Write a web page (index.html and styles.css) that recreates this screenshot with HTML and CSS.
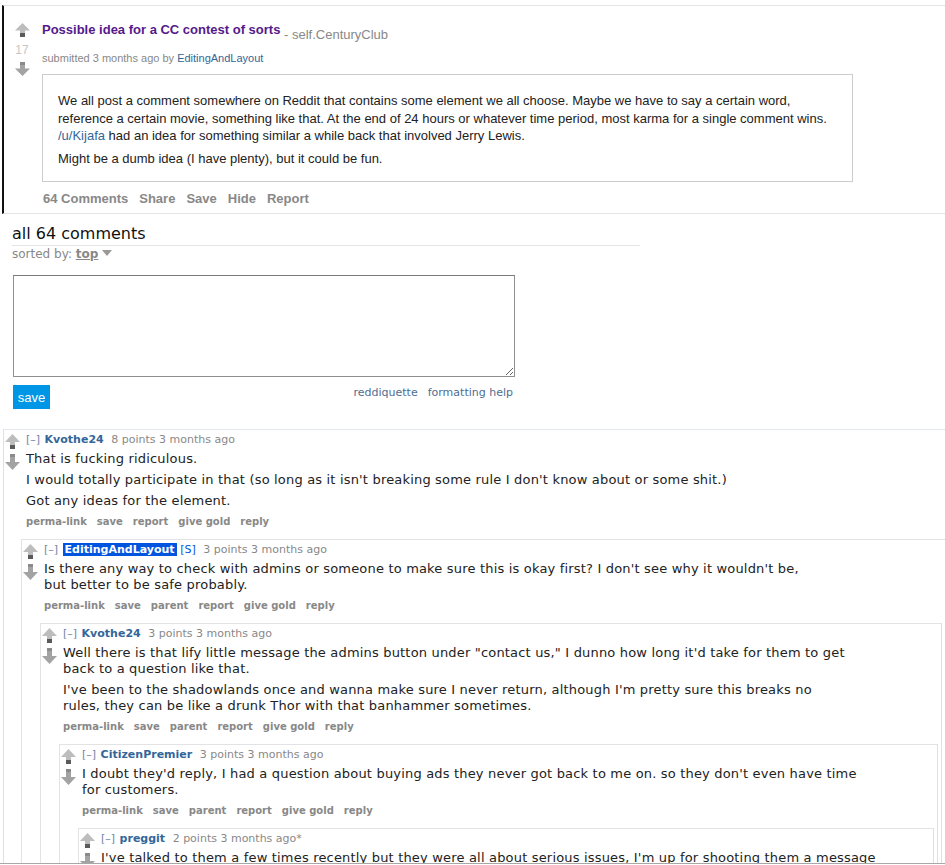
FILE: index.html
```html
<!DOCTYPE html>
<html>

<head>
	<meta charset="utf-8">
	<meta name="viewport" content="width=device-width, initial-scale=1">
	<title>Possible idea for a CC contest of sorts : CenturyClub</title>
	<link rel="stylesheet" href="styles.css">
</head>

<body>
	<div class="page">

		<div class="post">
			<div class="votes">
				<svg class="arrow" width="15" height="14" viewBox="0 0 15 14"><polygon class="up-head" points="7.5,0 15,7.5 10,7.5 10,10 5,10 5,7.5 0,7.5"/><rect class="up-base" x="5" y="10" width="5" height="4"/></svg>
				<div class="score">17</div>
				<svg class="arrow" width="15" height="14" viewBox="0 0 15 14"><rect class="down-base" x="5" y="0" width="5" height="3"/><polygon class="down-head" points="5,3 10,3 10,6.5 15,6.5 7.5,14 0,6.5 5,6.5"/></svg>
			</div>
			<div class="entry">
				<p class="title"><a class="title-link" href="#">Possible idea for a CC contest of sorts</a> <span class="domain">- <span class="domain-name">self.CenturyClub</span></span></p>
				<p class="tagline">submitted 3 months ago by <a href="#">EditingAndLayout</a></p>
				<div class="selftext">
					<p>We all post a comment somewhere on Reddit that contains some element we all choose. Maybe we have to say a certain word,<br>
						reference a certain movie, something like that. At the end of 24 hours or whatever time period, most karma for a single comment wins.<br>
						<a href="#">/u/Kijafa</a> had an idea for something similar a while back that involved Jerry Lewis.</p>
					<p>Might be a dumb idea (I have plenty), but it could be fun.</p>
				</div>
				<ul class="post-buttons">
					<li>64 Comments</li>
					<li>Share</li>
					<li>Save</li>
					<li>Hide</li>
					<li>Report</li>
				</ul>
			</div>
		</div>

		<div class="comment-area">
			<div class="panel-title">all 64 comments</div>
			<div class="sort">sorted by: <b>top</b> <span class="caret"></span></div>

			<textarea class="reply-box"></textarea>
			<div class="reply-bar">
				<button class="save-btn">save</button>
				<div class="help-links">
					<a href="#">reddiquette</a>
					<a href="#">formatting help</a>
				</div>
			</div>
		</div>

		<div class="comments">
			<div class="comment top">
				<div class="row">
					<div class="midcol">
						<svg class="arrow" width="15" height="15" viewBox="0 0 15 15"><polygon class="up-head" points="7.5,0 15,8 10,8 10,11 5,11 5,8 0,8"/><rect class="up-base" x="5" y="11" width="5" height="4"/></svg>
						<svg class="arrow" width="15" height="16" viewBox="0 0 15 16"><rect class="down-base" x="5" y="0" width="5" height="3"/><polygon class="down-head" points="5,3 10,3 10,8 15,8 7.5,16 0,8 5,8"/></svg>
					</div>
					<div class="body">
						<p class="ctag"><span class="expand">[&ndash;]</span> <a class="author" href="#">Kvothe24</a> <span class="when">8 points 3 months ago</span></p>
						<div class="md">
							<p>That is fucking ridiculous.</p>
							<p>I would totally participate in that (so long as it isn't breaking some rule I don't know about or some shit.)</p>
							<p>Got any ideas for the element.</p>
						</div>
						<ul class="flat-list">
							<li>perma-link</li>
							<li>save</li>
							<li>report</li>
							<li>give gold</li>
							<li>reply</li>
						</ul>
					</div>
				</div>

				<div class="comment">
					<div class="row">
						<div class="midcol">
							<svg class="arrow" width="15" height="15" viewBox="0 0 15 15"><polygon class="up-head" points="7.5,0 15,8 10,8 10,11 5,11 5,8 0,8"/><rect class="up-base" x="5" y="11" width="5" height="4"/></svg>
							<svg class="arrow" width="15" height="16" viewBox="0 0 15 16"><rect class="down-base" x="5" y="0" width="5" height="3"/><polygon class="down-head" points="5,3 10,3 10,8 15,8 7.5,16 0,8 5,8"/></svg>
						</div>
						<div class="body">
							<p class="ctag"><span class="expand">[&ndash;]</span> <a class="author submitter" href="#">EditingAndLayout</a> <span class="flag">[S]</span> <span class="when">3 points 3 months ago</span></p>
							<div class="md">
								<p>Is there any way to check with admins or someone to make sure this is okay first? I don't see why it wouldn't be,<br>
									but better to be safe probably.</p>
							</div>
							<ul class="flat-list">
								<li>perma-link</li>
								<li>save</li>
								<li>parent</li>
								<li>report</li>
								<li>give gold</li>
								<li>reply</li>
							</ul>
						</div>
					</div>

					<div class="comment">
						<div class="row">
							<div class="midcol">
								<svg class="arrow" width="15" height="15" viewBox="0 0 15 15"><polygon class="up-head" points="7.5,0 15,8 10,8 10,11 5,11 5,8 0,8"/><rect class="up-base" x="5" y="11" width="5" height="4"/></svg>
								<svg class="arrow" width="15" height="16" viewBox="0 0 15 16"><rect class="down-base" x="5" y="0" width="5" height="3"/><polygon class="down-head" points="5,3 10,3 10,8 15,8 7.5,16 0,8 5,8"/></svg>
							</div>
							<div class="body">
								<p class="ctag"><span class="expand">[&ndash;]</span> <a class="author" href="#">Kvothe24</a> <span class="when">3 points 3 months ago</span></p>
								<div class="md">
									<p>Well there is that lify little message the admins button under "contact us," I dunno how long it'd take for them to get<br>
										back to a question like that.</p>
									<p>I've been to the shadowlands once and wanna make sure I never return, although I'm pretty sure this breaks no<br>
										rules, they can be like a drunk Thor with that banhammer sometimes.</p>
								</div>
								<ul class="flat-list">
									<li>perma-link</li>
									<li>save</li>
									<li>parent</li>
									<li>report</li>
									<li>give gold</li>
									<li>reply</li>
								</ul>
							</div>
						</div>

						<div class="comment">
							<div class="row">
								<div class="midcol">
									<svg class="arrow" width="15" height="15" viewBox="0 0 15 15"><polygon class="up-head" points="7.5,0 15,8 10,8 10,11 5,11 5,8 0,8"/><rect class="up-base" x="5" y="11" width="5" height="4"/></svg>
									<svg class="arrow" width="15" height="16" viewBox="0 0 15 16"><rect class="down-base" x="5" y="0" width="5" height="3"/><polygon class="down-head" points="5,3 10,3 10,8 15,8 7.5,16 0,8 5,8"/></svg>
								</div>
								<div class="body">
									<p class="ctag"><span class="expand">[&ndash;]</span> <a class="author" href="#">CitizenPremier</a> <span class="when">3 points 3 months ago</span></p>
									<div class="md">
										<p>I doubt they'd reply, I had a question about buying ads they never got back to me on. so they don't even have time<br>
											for customers.</p>
									</div>
									<ul class="flat-list">
										<li>perma-link</li>
										<li>save</li>
										<li>parent</li>
										<li>report</li>
										<li>give gold</li>
										<li>reply</li>
									</ul>
								</div>
							</div>

							<div class="comment">
								<div class="row">
									<div class="midcol">
										<svg class="arrow" width="15" height="15" viewBox="0 0 15 15"><polygon class="up-head" points="7.5,0 15,8 10,8 10,11 5,11 5,8 0,8"/><rect class="up-base" x="5" y="11" width="5" height="4"/></svg>
										<svg class="arrow" width="15" height="16" viewBox="0 0 15 16"><rect class="down-base" x="5" y="0" width="5" height="3"/><polygon class="down-head" points="5,3 10,3 10,8 15,8 7.5,16 0,8 5,8"/></svg>
									</div>
									<div class="body">
										<p class="ctag"><span class="expand">[&ndash;]</span> <a class="author" href="#">preggit</a> <span class="when">2 points 3 months ago*</span></p>
										<div class="md">
											<p>I've talked to them a few times recently but they were all about serious issues, I'm up for shooting them a message</p>
										</div>
									</div>
								</div>
							</div>
						</div>
					</div>
				</div>
			</div>
		</div>

	</div>
</body>

</html>
```

FILE: styles.css
```css
html {
	overflow: hidden;
}

body {
	margin: 0;
	background-color: #FFFFFF;
	color: #222222;
	font-family: "DejaVu Sans", Verdana, sans-serif;
}

a {
	text-decoration: none;
}

.page {
	height: 863px;
	overflow: hidden;
	border-bottom: 1px solid #a8a8a8;
}

/* vote arrows */
.arrow {
	display: block;
}

.up-head {
	fill: #bdbdbd;
}

.up-base {
	fill: #5a5a5a;
}

.down-base {
	fill: #8a8a8a;
}

.down-head {
	fill: #a3a3a3;
}

/* the submission */
.post {
	display: flex;
	margin: 5px 0 0 2px;
	border-left: 2px solid #111111;
	border-top: 1px solid #e4e4e4;
	border-bottom: 1px solid #e4e4e4;
	padding-bottom: 7px;
	font-family: "Liberation Sans", Arial, sans-serif;
}

.votes {
	display: flex;
	flex-direction: column;
	align-items: center;
	width: 36px;
	padding-top: 17px;
}

.score {
	margin: 6px 0 5px;
	font-size: 12px;
	line-height: 14px;
	color: #c6c6c6;
}

.entry {
	flex: 1;
	margin-left: 2px;
	padding-top: 16px;
}

.title {
	margin: 0;
	height: 16px;
	font-size: 13px;
	line-height: 16px;
}

.title-link {
	color: #551a8b;
	font-weight: bold;
}

.domain {
	font-size: 13px;
	color: #888888;
	vertical-align: -5px;
	line-height: 1;
}

.tagline {
	margin: 14px 0 0;
	font-size: 11px;
	line-height: 13px;
	color: #888888;
}

.tagline a {
	color: #336699;
}

.selftext {
	width: 779px;
	margin-top: 9px;
	padding: 17px 15px 14px;
	border: 1px solid #cccccc;
	font-size: 13px;
	line-height: 17.5px;
}

.selftext p {
	margin: 0 0 5px;
}

.selftext p:last-child {
	margin-bottom: 0;
}

.selftext a {
	color: #336699;
}

.post-buttons {
	display: flex;
	gap: 11px;
	margin: 10px 0 0;
	padding: 0 0 0 1px;
	list-style: none;
	font-size: 13px;
	line-height: 14px;
	font-weight: bold;
	color: #888888;
}

/* comment header and reply form */
.comment-area {
	padding-left: 12px;
}

.panel-title {
	width: 628px;
	margin-top: 10px;
	padding-bottom: 1px;
	border-bottom: 1px solid #e4e4e4;
	font-size: 16px;
	line-height: 20px;
	color: #111111;
}

.sort {
	margin-top: 1px;
	font-size: 12px;
	line-height: 14px;
	color: #888888;
}

.sort b {
	text-decoration: underline;
}

.caret {
	display: inline-block;
	width: 0;
	height: 0;
	border-left: 5px solid transparent;
	border-right: 5px solid transparent;
	border-top: 6px solid #999999;
	vertical-align: 2px;
}

.reply-box {
	display: block;
	box-sizing: border-box;
	width: 502px;
	height: 102px;
	margin: 14px 0 0 1px;
	border: 1px solid #8f8f8f;
	border-top-color: #7a7a7a;
}

.reply-bar {
	display: flex;
	width: 500px;
	margin: 8px 0 0 1px;
}

.save-btn {
	width: 37px;
	height: 24px;
	padding: 0;
	border: none;
	background-color: #0096e6;
	color: #FFFFFF;
	font-family: "Liberation Sans", Arial, sans-serif;
	font-size: 13px;
}

.help-links {
	display: flex;
	gap: 10px;
	margin-left: auto;
	padding-top: 1px;
	font-size: 11px;
	line-height: 13px;
}

.help-links a {
	color: #4f6d92;
}

/* comment tree */
.comments {
	width: 945px;
	margin: 20px 0 0 3px;
	border-top: 1px solid #e3e7ee;
	border-left: 1px solid #d9e1eb;
}

.comment {
	margin: 11px 3px 0 18px;
	padding-top: 3px;
	border: 1px solid #e3e3e3;
	border-right-color: #e0e0e0;
}

.comment.top {
	margin: 0;
	border: none;
}

.comment.top>.comment {
	margin-left: 17px;
}

.row {
	display: flex;
}

.midcol {
	width: 15px;
	margin: 1px 6px 0 1px;
}

.midcol .arrow+.arrow {
	margin-top: 5px;
}

.body {
	flex: 1;
}

.ctag {
	margin: 0;
	font-size: 11px;
	line-height: 14px;
	color: #888888;
}

.expand {
	margin-right: 1px;
	color: #7085a5;
}

.author {
	color: #336699;
	font-weight: bold;
}

.author.submitter {
	padding: 0 2px;
	background-color: #0055df;
	color: #FFFFFF;
}

.flag {
	color: #0055df;
}

.when {
	margin-left: 4px;
}

.md {
	margin-top: 4px;
	font-size: 13px;
	line-height: 16px;
	letter-spacing: 0.18px;
	color: #222222;
}

.md p {
	margin: 0 0 5px;
}

.flat-list {
	display: flex;
	gap: 10px;
	margin: 0;
	padding: 1px 0 0;
	list-style: none;
	font-size: 10px;
	line-height: 13px;
	font-weight: bold;
	color: #888888;
}
```
